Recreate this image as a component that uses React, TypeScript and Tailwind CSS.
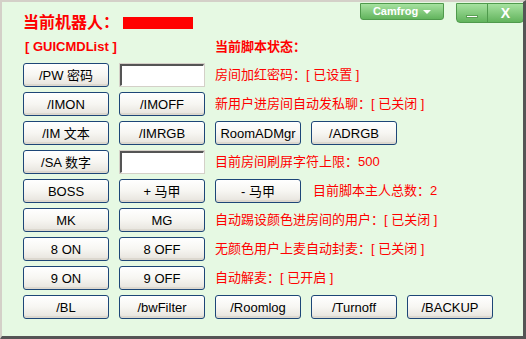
import React from "react";

const font = { fontFamily: '"Liberation Sans", "Noto Sans CJK SC", sans-serif' };

function Btn({ label }: { label: string }) {
  return (
    <button className="w-[86px] h-6 shrink-0 rounded-[3px] border border-[#1d4677] bg-gradient-to-b from-white via-[#f7f6f2] to-[#e6e3dc] text-[13px] text-black leading-none shadow-[inset_0_-2px_0_#dcd8cf]">
      {label}
    </button>
  );
}

function Field() {
  return (
    <div className="w-[86px] h-6 shrink-0 border border-[#d4d0c8] bg-white">
      <div className="h-full w-full border-t-2 border-l-2 border-[#555] border-r border-b border-r-white border-b-white" />
    </div>
  );
}

function Status({ text, className = "" }: { text: string; className?: string }) {
  return <span className={"text-[13px] text-[#ff0000] whitespace-nowrap " + className}>{text}</span>;
}

export default function App() {
  return (
    <div
      className="relative w-[526px] h-[339px] bg-[#e6f9e3] border-t-2 border-l-2 border-[#d4d0c8] border-r-[3px] border-b-[3px] border-r-[#555] border-b-[#555] overflow-hidden"
      style={font}
    >
      {/* window buttons */}
      <div className="absolute top-[1px] left-[358px] w-[84px] h-[17px] rounded-b-[3px] border border-[#4f9a4c] bg-gradient-to-b from-[#a6e2a0] to-[#62b45d] flex items-center justify-center gap-[5px] text-white text-[11px] font-bold">
        <span>Camfrog</span>
        <span className="w-0 h-0 border-l-[4px] border-r-[4px] border-t-[4px] border-l-transparent border-r-transparent border-t-white" />
      </div>
      <div className="absolute top-[1px] left-[454px] w-[68px] h-[20px] rounded-b-[4px] border border-[#4f9a4c] bg-gradient-to-b from-[#a6e2a0] to-[#62b45d] flex">
        <div className="w-[31px] h-full border-r border-[#4f9a4c] flex items-end justify-center pb-[4px]">
          <div className="w-[12px] h-[3px] bg-white border border-[#5aa055]" />
        </div>
        <div className="flex-1 flex items-center justify-center text-white text-[14px] font-bold leading-none">X</div>
      </div>

      <div className="pl-[21px] pt-[11px]">
        <div className="flex items-center h-[20px]">
          <span className="text-[16px] font-bold text-[#ff0000]">当前机器人：</span>
          <span className="ml-[4px] w-[70px] h-[12px] bg-[#ff0000]" />
        </div>
        <div className="flex items-center h-[14px] mt-[7px] text-[13px] font-bold text-[#ff0000]">
          <span className="w-[192px] pl-[2px]">[ GUICMDList ]</span>
          <span>当前脚本状态：</span>
        </div>

        <div className="flex flex-col gap-[5px] mt-[9px]">
          <div className="flex items-center gap-[10px]">
            <Btn label="/PW 密码" />
            <Field />
            <Status text="房间加红密码：[ 已设置 ]" />
          </div>
          <div className="flex items-center gap-[10px]">
            <Btn label="/IMON" />
            <Btn label="/IMOFF" />
            <Status text="新用户进房间自动发私聊：[ 已关闭 ]" />
          </div>
          <div className="flex items-center gap-[10px]">
            <Btn label="/IM 文本" />
            <Btn label="/IMRGB" />
            <Btn label="RoomADMgr" />
            <Btn label="/ADRGB" />
          </div>
          <div className="flex items-center gap-[10px]">
            <Btn label="/SA 数字" />
            <Field />
            <Status text="目前房间刷屏字符上限：500" />
          </div>
          <div className="flex items-center gap-[10px]">
            <Btn label="BOSS" />
            <Btn label="+ 马甲" />
            <Btn label="- 马甲" />
            <Status text="目前脚本主人总数：2" className="ml-[2px]" />
          </div>
          <div className="flex items-center gap-[10px]">
            <Btn label="MK" />
            <Btn label="MG" />
            <Status text="自动踢设颜色进房间的用户：[ 已关闭 ]" />
          </div>
          <div className="flex items-center gap-[10px]">
            <Btn label="8 ON" />
            <Btn label="8 OFF" />
            <Status text="无颜色用户上麦自动封麦：[ 已关闭 ]" />
          </div>
          <div className="flex items-center gap-[10px]">
            <Btn label="9 ON" />
            <Btn label="9 OFF" />
            <Status text="自动解麦：[ 已开启 ]" />
          </div>
          <div className="flex items-center gap-[10px]">
            <Btn label="/BL" />
            <Btn label="/bwFilter" />
            <Btn label="/Roomlog" />
            <Btn label="/Turnoff" />
            <Btn label="/BACKUP" />
          </div>
        </div>
      </div>
    </div>
  );
}
